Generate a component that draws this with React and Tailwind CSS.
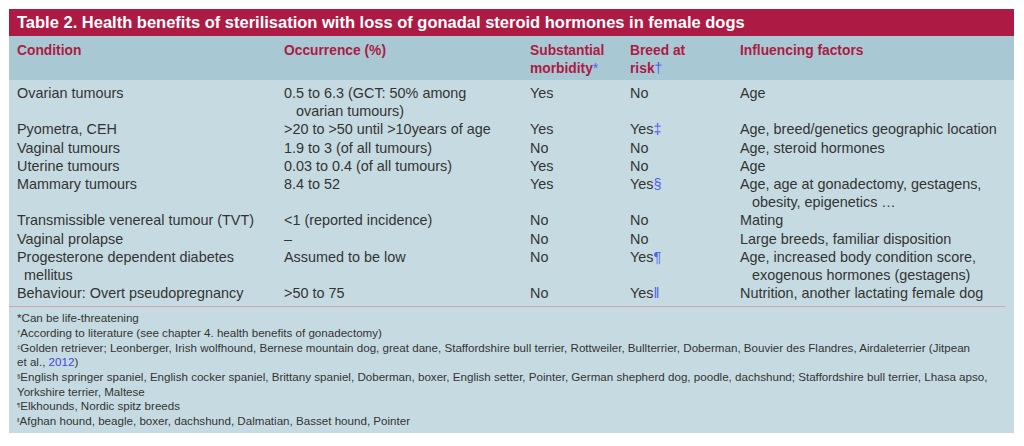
import React from "react";

const rows = [
  { c: "Ovarian tumours", o: ["0.5 to 6.3 (GCT: 50% among", "ovarian tumours)"], m: "Yes", b: "No", f: ["Age"] },
  { c: "Pyometra, CEH", o: [">20 to >50 until >10years of age"], m: "Yes", b: "Yes", bm: "‡", f: ["Age, breed/genetics geographic location"] },
  { c: "Vaginal tumours", o: ["1.9 to 3 (of all tumours)"], m: "No", b: "No", f: ["Age, steroid hormones"] },
  { c: "Uterine tumours", o: ["0.03 to 0.4 (of all tumours)"], m: "Yes", b: "No", f: ["Age"] },
  { c: "Mammary tumours", o: ["8.4 to 52"], m: "Yes", b: "Yes", bm: "§", f: ["Age, age at gonadectomy, gestagens,", "obesity, epigenetics …"] },
  { c: "Transmissible venereal tumour (TVT)", o: ["<1 (reported incidence)"], m: "No", b: "No", f: ["Mating"] },
  { c: "Vaginal prolapse", o: ["–"], m: "No", b: "No", f: ["Large breeds, familiar disposition"] },
  { c: ["Progesterone dependent diabetes", "mellitus"], o: ["Assumed to be low"], m: "No", b: "Yes", bm: "¶", f: ["Age, increased body condition score,", "exogenous hormones (gestagens)"] },
  { c: "Behaviour: Overt pseudopregnancy", o: [">50 to 75"], m: "No", b: "Yes", bm: "‖", f: ["Nutrition, another lactating female dog"] },
];

function Lines({ lines, indent = "pl-[12px]" }) {
  const arr = Array.isArray(lines) ? lines : [lines];
  return (
    <div>
      {arr.map((l, i) => (
        <div key={i} className={i > 0 ? indent : ""}>
          {l}
        </div>
      ))}
    </div>
  );
}

const cols = "grid grid-cols-[267px_246px_100px_110px_1fr]";

export default function App() {
  return (
    <div className="w-[1024px] h-[446px] bg-white pt-[9px] pl-[9px]" style={{ fontFamily: '"Liberation Sans", Arial, sans-serif' }}>
      <div className="w-[1005px] bg-[#c6dbe1] pb-[4px]">
        <div className="h-[27px] bg-[#ad1a43] text-white font-bold text-[16.5px] leading-[27px] pl-[8px]">
          Table 2. Health benefits of sterilisation with loss of gonadal steroid hormones in female dogs
        </div>
        <div className={`${cols} h-[44px] bg-[#a8c8d3] pl-[8px] pt-[6px] text-[#ad1a43] font-bold text-[13.8px] leading-[18px]`}>
          <div>Condition</div>
          <div>Occurrence (%)</div>
          <div>
            Substantial
            <br />
            morbidity<span className="text-[#4d5ff2] font-normal">*</span>
          </div>
          <div>
            Breed at
            <br />
            risk<span className="text-[#4d5ff2] font-normal">†</span>
          </div>
          <div>Influencing factors</div>
        </div>
        <div className={`${cols} pl-[8px] pt-[4px] text-[14.4px] leading-[18.18px] text-[#333333]`}>
          {rows.map((r, i) => (
            <React.Fragment key={i}>
              <Lines lines={r.c} indent="pl-[7px]" />
              <Lines lines={r.o} />
              <div>{r.m}</div>
              <div>
                {r.b}
                {r.bm && <span className="text-[#4d5ff2]">{r.bm}</span>}
              </div>
              <Lines lines={r.f} />
            </React.Fragment>
          ))}
        </div>
        <div className="h-px bg-[#d4a2b0] mt-[4px] w-[996px]" />
        <div className="pl-[8px] pt-[4px] text-[11.6px] leading-[14.65px] text-[#333333]">
          <div>*Can be life-threatening</div>
          <div>
            <sup className="text-[6px]">†</sup>According to literature (see chapter 4. health benefits of gonadectomy)
          </div>
          <div>
            <sup className="text-[6px]">‡</sup>Golden retriever; Leonberger, Irish wolfhound, Bernese mountain dog, great dane, Staffordshire bull terrier, Rottweiler, Bullterrier, Doberman, Bouvier des Flandres, Airdaleterrier (Jitpean
          </div>
          <div>
            et al., <span className="text-[#3b47e8]">2012</span>)
          </div>
          <div>
            <sup className="text-[6px]">§</sup>English springer spaniel, English cocker spaniel, Brittany spaniel, Doberman, boxer, English setter, Pointer, German shepherd dog, poodle, dachshund; Staffordshire bull terrier, Lhasa apso,
          </div>
          <div>Yorkshire terrier, Maltese</div>
          <div>
            <sup className="text-[6px]">¶</sup>Elkhounds, Nordic spitz breeds
          </div>
          <div>
            <sup className="text-[6px]">‖</sup>Afghan hound, beagle, boxer, dachshund, Dalmatian, Basset hound, Pointer
          </div>
        </div>
      </div>
    </div>
  );
}
